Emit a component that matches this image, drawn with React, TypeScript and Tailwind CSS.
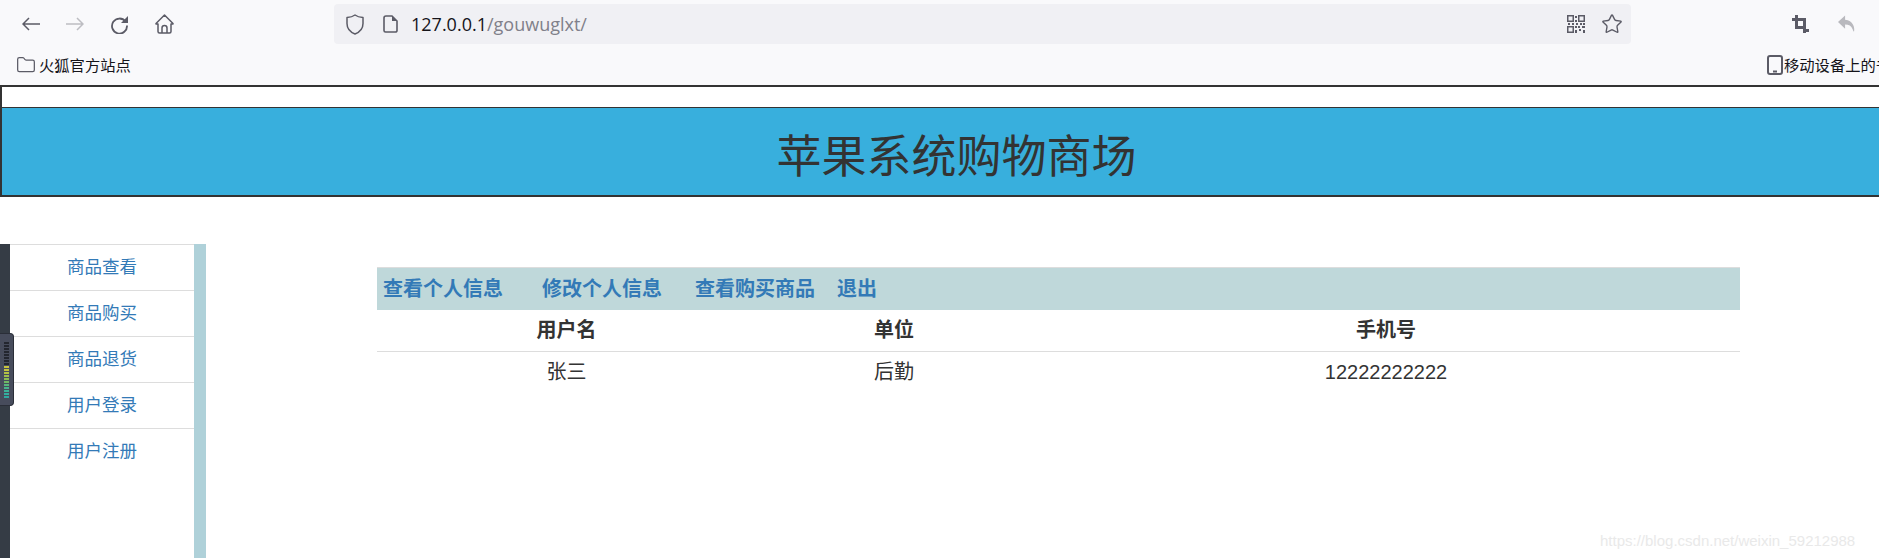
import { Folder, Star } from "lucide-react";

const cjk = "font-['Noto_Sans','Noto_Sans_CJK_SC',sans-serif]";
const menu = ["商品查看", "商品购买", "商品退货", "用户登录", "用户注册"];
const levels = [
  "bg-[#23262f]",
  "bg-[#23262f]",
  "bg-[#23262f]",
  "bg-[#23262f]",
  "bg-[#23262f]",
  "bg-[#23262f]",
  "bg-[#23262f]",
  "bg-[#23262f]",
  "bg-[#c9c43f]",
  "bg-[#c4c440]",
  "bg-[#b4c244]",
  "bg-[#a0be4c]",
  "bg-[#8cbc54]",
  "bg-[#70b864]",
  "bg-[#58b67c]",
  "bg-[#48b48c]",
  "bg-[#3cb298]",
  "bg-[#34aea0]",
  "bg-[#2fa8a0]",
];

function ArrowIcon({ flip, className }: { flip?: boolean; className: string }) {
  return (
    <svg width="18" height="14" viewBox="0 0 18 14" fill="none" stroke="currentColor" strokeWidth="1.5" className={className}>
      {flip ? <path d="M0 7h17M11 1l6 6-6 6" /> : <path d="M18 7H1M7 1 1 7l6 6" />}
    </svg>
  );
}

function ReloadIcon() {
  return (
    <svg width="19" height="19" viewBox="0 0 19 19" fill="none">
      <path d="M15.500 6.500A7.500 7.500 0 1 0 17 10.500" stroke="#5b5b66" strokeWidth="1.800" />
      <path d="M18 1v7h-7z" fill="#5b5b66" />
    </svg>
  );
}

function HomeIcon() {
  return (
    <svg width="19" height="20" viewBox="0 0 19 20" fill="none" stroke="#5b5b66" strokeWidth="1.500" strokeLinejoin="round">
      <path d="M9.500 1 1 9.500V10h2v7.500A1.500 1.500 0 0 0 4.500 19h10a1.500 1.500 0 0 0 1.500-1.500V10h2v-.5z" />
      <path d="M7 19v-5a2.500 2.500 0 0 1 5 0v5" />
    </svg>
  );
}

function ShieldIcon() {
  return (
    <svg width="18" height="21" viewBox="0 0 18 21" fill="none" stroke="#5b5b66" strokeWidth="1.500" strokeLinejoin="round" className="ml-3">
      <path d="M9 1c2 1.500 4.500 2.300 8 2.500v6c0 5-3 8.500-8 10.500-5-2-8-5.500-8-10.500v-6C4.500 3.300 7 2.500 9 1z" />
    </svg>
  );
}

function PageIcon() {
  return (
    <svg width="15" height="18" viewBox="0 0 15 18" className="ml-[19px]" fill="none">
      <path d="M3 1h6l5 5v9.500a1.500 1.500 0 0 1-1.500 1.500h-10A1.500 1.500 0 0 1 1 15.500V3a2 2 0 0 1 2-2z" stroke="#5b5b66" strokeWidth="1.600" />
      <path d="M9 1v5h5z" fill="#5b5b66" />
    </svg>
  );
}

function QrIcon() {
  return (
    <svg width="18" height="18" viewBox="0 0 18 18" fill="#5b5b66">
      <path d="M0 0h7v7H0zM1.500 1.500v4h4v-4zM11 0h7v7h-7zM12.500 1.500v4h4v-4zM0 11h7v7H0zM1.500 12.500v4h4v-4z" fillRule="evenodd" />
      <path d="M8 1h2v2H8zM8 5h2v2H8zM1 8h2v2H1zM5 8h2v2H5zM9 8h2v2H9zM13 8h2v2h-2zM16 8h2v2h-2zM8 11h2v2H8zM11 11h2v2h-2zM15 11h3v2h-3zM8 15h2v3H8zM12 14h2v2h-2zM16 15h2v3h-2z" />
    </svg>
  );
}

function CropIcon() {
  return (
    <svg width="17" height="18" viewBox="0 0 17 18" fill="#5b5b66" fillRule="evenodd">
      <path d="M3 0h3v3h8v11h3v3h-3v1h-3v-4H3V6H0V3h3zM6 6v5h5V6z" />
    </svg>
  );
}

function UndoIcon() {
  return (
    <svg width="17" height="18" viewBox="0 0 18 18" fill="#b9b9be">
      <path d="M7.500 0 0 7l7.500 7V9.500c4 0 6.500 1.500 8 5 .5 1.500 1 2.500 1.500 2.500C18 13 16 5 7.500 4.500z" />
    </svg>
  );
}

function Toolbar() {
  return (
    <div className="h-[85px] bg-[#f9f9fb]">
      <div className="flex h-[48px] items-center">
        <div className="flex w-[334px] items-center gap-[26px] pl-[22px] text-[#5b5b66]">
          <ArrowIcon className="text-[#5b5b66]" />
          <ArrowIcon flip className="text-[#bdbdc2]" />
          <ReloadIcon />
          <HomeIcon />
        </div>
        <div className="flex h-10 w-[1297px] items-center rounded bg-[#f0f0f4] text-[#5b5b66]">
          <ShieldIcon />
          <PageIcon />
          <span className="ml-[13px] font-['Open_Sans',sans-serif] text-[18px] text-[#15141a]">
            127.0.0.1<span className="text-[#80808a]">/gouwuglxt/</span>
          </span>
          <div className="ml-auto flex items-center gap-[16px] pr-[8px]">
            <QrIcon />
            <Star size={22} strokeWidth={1.5} />
          </div>
        </div>
        <div className="ml-[161px] flex items-center gap-[29px]">
          <CropIcon />
          <UndoIcon />
        </div>
      </div>
      <div className={`flex h-[37px] items-center justify-between whitespace-nowrap text-[15.300px] text-[#15141a] ${cjk}`}>
        <div className="flex items-center gap-[3px] pb-[3px] pl-[16px]">
          <Folder size={20} strokeWidth={1.5} className="text-[#5b5b66]" />
          火狐官方站点
        </div>
        <div className="flex w-[112px] shrink-0 items-center gap-[1px] overflow-hidden pb-[3px]">
          <svg width="16" height="20" viewBox="0 0 16 20" className="shrink-0" fill="none" stroke="#5b5b66" strokeWidth="2">
            <rect x="1" y="1" width="14" height="18" rx="2" />
            <path d="M6 16.500h4" />
          </svg>
          移动设备上的书签
        </div>
      </div>
    </div>
  );
}

export default function App() {
  return (
    <div className={`relative h-[558px] w-[1879px] overflow-hidden bg-white text-[#333] ${cjk}`}>
      <Toolbar />
      <header className="w-[1900px] border-2 border-[#333] pt-5">
        <div className="flex h-[88px] items-center justify-center border-t border-[#333] bg-[#38afdd] pl-[13px] pt-[8px] text-[45px]">
          苹果系统购物商场
        </div>
      </header>
      <main className="mt-[47px] flex h-[314px]">
        <aside className="flex h-full w-[206px] shrink-0">
          <div className="w-[10px] bg-[#353c45]" />
          <ul className="flex-1 border-t border-[#ddd] text-center text-[17.500px] text-[#337ab7]">
            {menu.map((item) => (
              <li key={item} className="flex h-[46px] items-center justify-center border-b border-[#ddd] pb-[3px] last:border-b-0">
                {item}
              </li>
            ))}
          </ul>
          <div className="w-3 bg-[#afd1d9]" />
        </aside>
        <section className="ml-[171px] w-[1363px] pt-[23px]">
          <nav className="flex h-[43px] items-center whitespace-nowrap border-t border-[#ddd] bg-[#bfd8da] pl-[6px] text-[20px] font-bold text-[#337ab7]">
            <a className="w-[159px]">查看个人信息</a>
            <a className="w-[153px]">修改个人信息</a>
            <a className="w-[142px]">查看购买商品</a>
            <a>退出</a>
          </nav>
          <table className="w-full table-fixed text-center text-[20px]">
            <colgroup>
              <col className="w-[379px]" />
              <col className="w-[276px]" />
              <col />
            </colgroup>
            <thead>
              <tr className="h-[41px] border-b border-[#ddd] font-bold">
                <th>用户名</th>
                <th>单位</th>
                <th>手机号</th>
              </tr>
            </thead>
            <tbody>
              <tr className="h-[42px]">
                <td>张三</td>
                <td>后勤</td>
                <td className="font-['Liberation_Sans',sans-serif]">12222222222</td>
              </tr>
            </tbody>
          </table>
        </section>
      </main>
      {/* widget docked on the left edge */}
      <div className="absolute left-0 top-[333px] flex h-[73px] w-[14px] flex-col items-center justify-end gap-[1px] rounded-r border-y border-r border-[#2a2e38] bg-[#474c5c] pb-[7px] pr-[1px]">
        {levels.map((c, i) => (
          <span key={i} className={`block h-[2px] w-[5px] ${c}`} />
        ))}
      </div>
      {/* watermark */}
      <span className="absolute left-[1600px] top-[530px] font-['Liberation_Sans',sans-serif] text-[15px] text-[#e9e9e9]">
        https://blog.csdn.net/weixin_59212988
      </span>
    </div>
  );
}
